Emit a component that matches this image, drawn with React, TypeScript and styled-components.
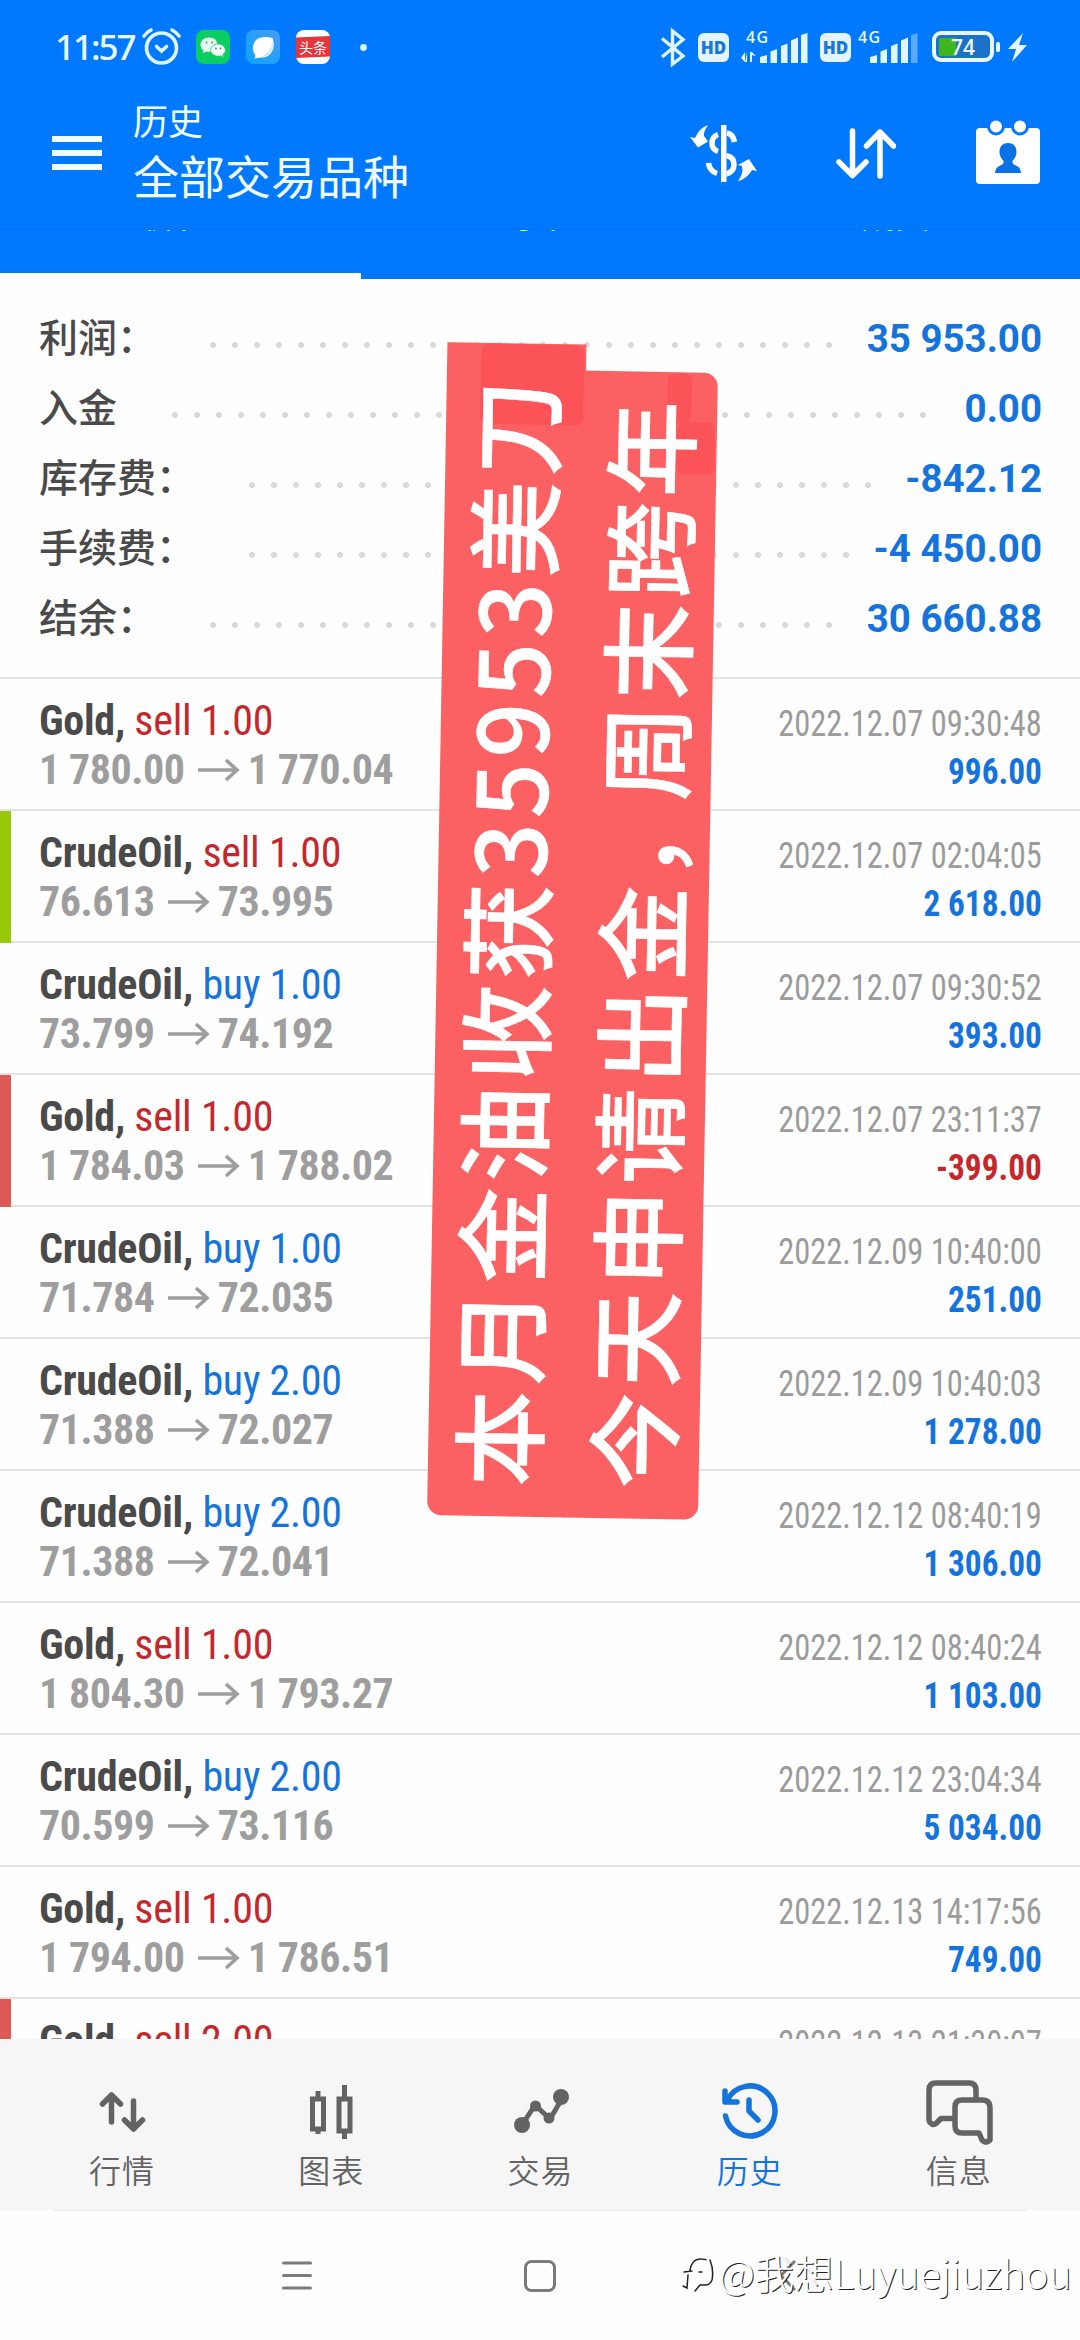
import React from "react";
import styled, { createGlobalStyle } from "styled-components";

const cjk = `"Noto Sans CJK SC", sans-serif`;
const condensed = `"Roboto Condensed", Roboto, ${cjk}`;

const GlobalStyle = createGlobalStyle`
  body { margin: 0; background: #fefefe; }
  * { box-sizing: border-box; }
`;

const Screen = styled.div`
  position: relative;
  width: 1080px;
  height: 2340px;
  overflow: hidden;
  display: flex;
  flex-direction: column;
  background: #fefefe;
  font-family: Roboto, ${cjk};
`;

const StatusBar = styled.div`
  flex: none;
  height: 94px;
  background: #0079ff;
  display: flex;
  align-items: center;
  padding: 0 52px 0 55px;
`;

const Clock = styled.span`
  width: 85px;
  color: #e9fbff;
  font: 500 35px/40px "Noto Sans", sans-serif;
  letter-spacing: -2px;
  white-space: nowrap;
`;

const StatusIcon = styled.svg<{ $gap: number }>`
  display: block;
  flex: none;
  overflow: visible;
  margin-left: ${(p) => p.$gap}px;
`;

const Spacer = styled.div`
  flex: 1;
`;

const HdBadge = styled.span<{ $gap: number }>`
  margin-left: ${(p) => p.$gap}px;
  width: 31px;
  height: 29px;
  border-radius: 6px;
  background: #e4f4ff;
  color: #1a78d8;
  font: 800 17px/29px "Open Sans", sans-serif;
  text-align: center;
`;

const Header = styled.header`
  flex: none;
  height: 136px;
  background: #0079ff;
  border-bottom: 1px solid #0070ee;
  display: flex;
  align-items: flex-start;
  padding: 0 40px 0 52px;
`;

const Titles = styled.div`
  margin-left: 31px;
  display: flex;
  flex-direction: column;
  color: #f1feff;
  font-family: ${cjk};
  font-weight: 400;
`;

const Caption = styled.div`
  margin-top: 0;
  font-size: 35px;
  line-height: 52px;
`;

const Title = styled.div`
  font-size: 46px;
  line-height: 57px;
`;

const HeaderIcon = styled.svg<{ $top: number; $gap: number }>`
  display: block;
  margin-top: ${(p) => p.$top}px;
  margin-left: ${(p) => p.$gap}px;
`;

const Tabs = styled.div`
  flex: none;
  height: 49px;
  background: #0079ff;
  display: grid;
  grid-template-columns: 361px 358px 361px;
`;

const Tab = styled.div<{ $active?: boolean }>`
  overflow: hidden;
  display: flex;
  justify-content: center;
  border-bottom: ${(p) => (p.$active ? "6px solid #fff" : "0")};
  color: #d8f4ff;
  font: 400 34px/40px ${cjk};
`;

const TabText = styled.span`
  margin-top: -36px;
  padding-right: 8px;
`;

const Summary = styled.section`
  flex: none;
  height: 398px;
  padding: 24px 38px 0 39px;
`;

const SummaryRow = styled.div`
  height: 70px;
  display: flex;
  align-items: center;
`;

const SummaryLabel = styled.span<{ $width: number }>`
  width: ${(p) => p.$width}px;
  flex: none;
  color: #4a4a4a;
  font: 500 39px/64px ${cjk};
  padding-bottom: 6px;
  white-space: nowrap;
`;

const Dots = styled.span<{ $count: number }>`
  flex: none;
  width: ${(p) => p.$count * 22}px;
  height: 6px;
  margin-top: 14px;
  background: radial-gradient(circle at 3px 3px, #dadada 2.6px, transparent 3.4px) 0 0 / 22px 6px repeat-x;
`;

const SummaryValue = styled.span`
  margin-left: auto;
  padding-top: 1px;
  color: #1474dc;
  font: 700 38.5px/70px Roboto, sans-serif;
  white-space: nowrap;
`;

const List = styled.section`
  flex: none;
  height: 1362px;
  overflow: hidden;
`;

const Deal = styled.div`
  position: relative;
  height: 132px;
  border-top: 2px solid #e3e3e3;
  padding: 17px 38px 0 39px;
  display: flex;
  justify-content: space-between;
  font-family: ${condensed};
  font-stretch: 75%;
  white-space: nowrap;
`;

const Mark = styled.span<{ $color: string }>`
  position: absolute;
  left: 0;
  top: 0;
  width: 11px;
  height: 132px;
  z-index: 1;
  background: ${(p) => p.$color};
`;

const DealLeft = styled.div`
  font-size: 42px;
  line-height: 49px;
  letter-spacing: -0.25px;
`;

const DealRight = styled.div`
  padding-top: 4px;
  font-size: 36px;
  line-height: 48px;
  text-align: right;
`;

const Symbol = styled.span`
  color: #4a4a4a;
  font-weight: 700;
`;

const Side = styled.span<{ $buy: boolean }>`
  color: ${(p) => (p.$buy ? "#1474dc" : "#c5282c")};
`;

const Prices = styled.div`
  display: flex;
  align-items: center;
  height: 49px;
  color: #9e9e9e;
  font-weight: 700;
  letter-spacing: -0.45px;
`;

const Arrow = styled.svg`
  margin: 0 8px 0 13px;
`;

const Time = styled.div`
  color: #9b9b9b;
  transform: scaleX(0.9);
  transform-origin: right;
`;

const Profit = styled.div<{ $loss: boolean }>`
  color: ${(p) => (p.$loss ? "#c5282c" : "#1474dc")};
  font-weight: 700;
  transform: scaleX(0.925);
  transform-origin: right;
`;

const BottomNav = styled.nav`
  flex: none;
  height: 171px;
  background: #f6f6f6;
  display: grid;
  grid-template-columns: repeat(5, 209.2px);
  justify-content: center;
  padding-left: 1px;
`;

const NavItem = styled.div<{ $active?: boolean }>`
  display: flex;
  flex-direction: column;
  align-items: center;
  padding-top: 37px;
  color: ${(p) => (p.$active ? "#1474dc" : "#636363")};
`;

const NavLabel = styled.span`
  margin-top: -4px;
  font: 400 32px/50px ${cjk};
  font-weight: 350;
  letter-spacing: 1px;
`;

const Hairline = styled.div`
  flex: none;
  height: 1px;
  margin: 0 52px;
  background: #ececec;
`;

const SystemBar = styled.div`
  flex: 1;
  display: flex;
  align-items: center;
  padding: 0 0 0 282px;
`;

const SysIcon = styled.svg<{ $gap: number }>`
  display: block;
  margin-left: ${(p) => p.$gap}px;
`;

const Banner = styled.div`
  position: absolute;
  left: 427px;
  top: 1515px;
  width: 1173px;
  transform-origin: 0 0;
  transform: rotate(-89deg);
  color: #fff;
  font: 500 96px/137px ${cjk};
  letter-spacing: 5.4px;
  white-space: nowrap;
`;

const BannerLine = styled.div<{ $w: number; $h: number; $radius: string }>`
  position: relative;
  width: ${(p) => p.$w}px;
  height: ${(p) => p.$h}px;
  padding-left: 30px;
  border-radius: ${(p) => p.$radius};
  background: #fb6162;

  & + & {
    margin-top: -2px;
  }
`;

const BannerText = styled.span<{ $lift: number }>`
  position: relative;
  top: -${(p) => p.$lift}px;
  -webkit-text-stroke: 0.6px #fff;
`;

const Patch = styled.span<{ $x: number; $y: number; $w: number; $h: number }>`
  position: absolute;
  left: ${(p) => p.$x}px;
  top: ${(p) => p.$y}px;
  width: ${(p) => p.$w}px;
  height: ${(p) => p.$h}px;
  border-radius: 8px;
  background: rgba(251, 70, 76, 0.5);
`;

const Comma = styled.span`
  margin-right: -22px;
`;

const Watermark = styled.div`
  position: absolute;
  left: 682px;
  top: 2245px;
  display: flex;
  align-items: center;
  gap: 4px;
  color: #fff;
  font: 300 39.400px/54px ${cjk};
  text-shadow: 1px 1px 0.5px #222;
  white-space: nowrap;
`;

const summary = [
  { label: "利润：", value: "35 953.00", start: 171, count: 29 },
  { label: "入金", value: "0.00", start: 133, count: 35 },
  { label: "库存费：", value: "-842.12", start: 210, count: 29 },
  { label: "手续费：", value: "-4 450.00", start: 210, count: 28 },
  { label: "结余：", value: "30 660.88", start: 171, count: 29 },
];

type DealData = {
  symbol: string;
  side: "buy" | "sell";
  lots: string;
  from: string;
  to: string;
  time: string;
  profit: string;
  mark?: string;
};

const deals: DealData[] = [
  { symbol: "Gold", side: "sell", lots: "1.00", from: "1 780.00", to: "1 770.04", time: "2022.12.07 09:30:48", profit: "996.00" },
  { symbol: "CrudeOil", side: "sell", lots: "1.00", from: "76.613", to: "73.995", time: "2022.12.07 02:04:05", profit: "2 618.00", mark: "#98c90b" },
  { symbol: "CrudeOil", side: "buy", lots: "1.00", from: "73.799", to: "74.192", time: "2022.12.07 09:30:52", profit: "393.00" },
  { symbol: "Gold", side: "sell", lots: "1.00", from: "1 784.03", to: "1 788.02", time: "2022.12.07 23:11:37", profit: "-399.00", mark: "#dc5a55" },
  { symbol: "CrudeOil", side: "buy", lots: "1.00", from: "71.784", to: "72.035", time: "2022.12.09 10:40:00", profit: "251.00" },
  { symbol: "CrudeOil", side: "buy", lots: "2.00", from: "71.388", to: "72.027", time: "2022.12.09 10:40:03", profit: "1 278.00" },
  { symbol: "CrudeOil", side: "buy", lots: "2.00", from: "71.388", to: "72.041", time: "2022.12.12 08:40:19", profit: "1 306.00" },
  { symbol: "Gold", side: "sell", lots: "1.00", from: "1 804.30", to: "1 793.27", time: "2022.12.12 08:40:24", profit: "1 103.00" },
  { symbol: "CrudeOil", side: "buy", lots: "2.00", from: "70.599", to: "73.116", time: "2022.12.12 23:04:34", profit: "5 034.00" },
  { symbol: "Gold", side: "sell", lots: "1.00", from: "1 794.00", to: "1 786.51", time: "2022.12.13 14:17:56", profit: "749.00" },
  { symbol: "Gold", side: "sell", lots: "2.00", from: "", to: "", time: "2022.12.13 21:30:07", profit: "", mark: "#dc5a55" },
];

const Signal = ({ arrows, weak }: { arrows?: boolean; weak?: boolean }) => (
  <StatusIcon $gap={arrows ? 12 : 7} width={arrows ? 67 : 60} height="34" viewBox={arrows ? "0 0 67 34" : "7 0 60 34"} fill="#e4f6ff">
    <text x={arrows ? 5 : 7} y="12.500" fontFamily="Open Sans" fontSize="16" fontWeight="600" textLength="22">4G</text>
    {arrows && <path d="M4 22v10l-4-4M4 32h2V22zM9 32V22h2l4 4-4-1v7z" />}
    <path d="M19 33v-6l7-2v8zM29.500 33V21.500l6.500-2.500v14zM40 33V16l6.500-2.500V33zM50 33V10.500L57 7.500V33z" />
    <path d="M60 33V5l6.500-2v30z" opacity={weak ? 0.4 : 1} />
  </StatusIcon>
);

const App = () => (
  <>
    <GlobalStyle />
    <Screen>
      <StatusBar>
        <Clock>11:57</Clock>
        <StatusIcon $gap={2} width="39" height="38" viewBox="0 0 39 38" fill="none" stroke="#e0f6ff" strokeWidth="3.6" strokeLinecap="round">
          <circle cx="19.500" cy="20" r="15" />
          <path d="M2 8q3-4 7-6M30 2q4 2 7 6M14.500 18.500l5 4.500 5-4.500" />
        </StatusIcon>
        <StatusIcon $gap={15} width="34" height="34" viewBox="0 0 34 34">
          <rect width="34" height="34" rx="8" fill="#0ace64" />
          <path d="M13 7.500c-5 0-8.500 3.200-8.500 7.200 0 2.300 1.200 4.200 3 5.500l-.8 3 3.300-1.800c1 .3 2 .4 3 .4 5 0 8.500-3.100 8.500-7.100s-3.500-7.200-8.500-7.200z" fill="#e9fff2" />
          <path d="M22 14c-4.200 0-7.200 2.800-7.200 6.100s3 6.100 7.200 6.100c.9 0 1.800-.1 2.500-.4l3 1.600-.7-2.700c1.600-1.100 2.600-2.700 2.600-4.600 0-3.300-3.200-6.100-7.400-6.100z" fill="#fff" stroke="#0ace64" strokeWidth=".8" />
          <g fill="#18a85a"><circle cx="10.500" cy="12.500" r="1" /><circle cx="16" cy="12.500" r="1" /><circle cx="20" cy="18.500" r=".9" /><circle cx="24.500" cy="18.500" r=".9" /></g>
        </StatusIcon>
        <StatusIcon $gap={16} width="34" height="34" viewBox="0 0 34 34">
          <defs>
            <linearGradient id="browser" x1="0" y1="1" x2="1" y2="0"><stop offset="0" stopColor="#08a4ff" /><stop offset="1" stopColor="#4a9cf2" /></linearGradient>
          </defs>
          <rect width="34" height="34" rx="8" fill="url(#browser)" />
          <path d="M26.500 8q3 9-1 14.500t-10 5l-7 1 1-3q-4-5-2-11T15 7.500t11.500.5z" fill="#fff" />
          <path d="M27 11q2 9-5 14-3 2-7 2 10-5 12-16z" fill="#d3e8f8" />
        </StatusIcon>
        <StatusIcon $gap={16} width="34" height="34" viewBox="0 0 34 34">
          <rect width="34" height="34" rx="8" fill="#fff" />
          <path d="M0 7.500L34 6v20.500L0 28z" fill="#e2383c" />
          <text x="17" y="23" textAnchor="middle" fontFamily="Noto Sans CJK SC" fontWeight="400" fontSize="14" fill="#fff">头条</text>
        </StatusIcon>
        <StatusIcon $gap={30} width="7" height="7" viewBox="0 0 7 7"><circle cx="3.500" cy="3.500" r="3.400" fill="#d9f3ff" /></StatusIcon>
        <Spacer />
        <StatusIcon $gap={0} width="26" height="39" viewBox="0 0 26 39" fill="none" stroke="#e0f6ff" strokeWidth="3.400">
          <path d="M2 10.500L23 28 12.500 36V3L23 11.500 2 29" />
        </StatusIcon>
        <HdBadge $gap={12}>HD</HdBadge>
        <Signal arrows />
        <HdBadge $gap={12}>HD</HdBadge>
        <Signal weak />
        <StatusIcon $gap={14} width="96" height="32" viewBox="0 0 96 32">
          <rect x="2" y="2" width="58" height="27" rx="7" fill="#1c72c8" stroke="#e6f7ff" strokeWidth="4" />
          <path d="M7 7h17v18H7z" fill="#3fb51f" />
          <text x="19" y="23.500" fontFamily="Open Sans" fontWeight="600" fontSize="21" fill="#f2fbe8" textLength="24">74</text>
          <rect x="64" y="11" width="4" height="10" rx="1.500" fill="#e6f7ff" />
          <path d="M91 2L76 18h8l-4 13 15-17h-8z" fill="#e6f7ff" />
        </StatusIcon>
      </StatusBar>

      <Header>
        <HeaderIcon $top={42} $gap={0} width="50" height="34" viewBox="0 0 50 34" fill="#f1feff">
          <path d="M0 0h50v6H0zM0 14h50v6H0zM0 28h50v6H0z" />
        </HeaderIcon>
        <Titles>
          <Caption>历史</Caption>
          <Title>全部交易品种</Title>
        </Titles>
        <Spacer />
        <HeaderIcon $top={31} $gap={0} width="67" height="57" viewBox="0 0 67 57" fill="#fff">
          <path d="M18 0q-5 7-4 11l4 5.500-10 6L0 12l5 1Q9 3 18 0zM48 56q6-8 4-15l-4-1 11-6 8 12-5-1q-5 9-14 11z" />
          <path d="M28 9.500q-6 2-6 9 0 6 6 8M37 8q6 1 7.500 9M18.500 38q1 8 8.500 10.500M36 30.500q8 1.500 8 9t-8 9.500" fill="none" stroke="#fff" strokeWidth="5.500" />
          <path d="M31 0h5v57h-5z" stroke="#0079ff" strokeWidth="1.200" strokeOpacity=".8" />
          <path d="M31 0h5.500v57H31z" />
        </HeaderIcon>
        <HeaderIcon $top={34} $gap={79} width="60" height="51" viewBox="0 0 60 51" fill="none" stroke="#fff" strokeWidth="5.500" strokeLinecap="round" strokeLinejoin="round">
          <path d="M16.500 3v44M3 34l13.500 13.500L30 34M44 48V4M30.500 18L44 4l13.500 14" />
        </HeaderIcon>
        <HeaderIcon $top={26} $gap={80} width="64" height="64" viewBox="0 0 64 64">
          <rect y="8" width="64" height="56" rx="4" fill="#fff" />
          <g fill="#fff" stroke="#0079ff" strokeWidth="3"><circle cx="20" cy="6.500" r="7.500" /><circle cx="44" cy="6.500" r="7.500" /></g>
          <path d="M32 23c5 0 8.500 3 8.500 9 0 4-2 7-4 9v2c1 3 8 2 8.500 10H19c.5-8 7.500-7 8.500-10v-2c-2-2-4-5-4-9 0-6 3.500-9 8.500-9z" fill="#0a72e6" />
        </HeaderIcon>
      </Header>
      <Tabs>
        <Tab $active><TabText>价位</TabText></Tab>
        <Tab><TabText>订单</TabText></Tab>
        <Tab><TabText>成交</TabText></Tab>
      </Tabs>

      <Summary>
        {summary.map((s) => (
          <SummaryRow key={s.label}>
            <SummaryLabel $width={s.start}>{s.label}</SummaryLabel>
            <Dots $count={s.count} />
            <SummaryValue>{s.value}</SummaryValue>
          </SummaryRow>
        ))}
      </Summary>

      <List>
        {deals.map((d) => (
          <Deal key={d.time}>
            {d.mark && <Mark $color={d.mark} />}
            <DealLeft>
              <Symbol>{d.symbol}, </Symbol>
              <Side $buy={d.side === "buy"}>{d.side} {d.lots}</Side>
              {d.from && (
                <Prices>
                  <span>{d.from}</span>
                  <Arrow width="42" height="24" viewBox="0 0 42 24" fill="none" stroke="#9e9e9e" strokeWidth="3.600">
                    <path d="M0 12h39M28 2l11 10-11 10" />
                  </Arrow>
                  <span>{d.to}</span>
                </Prices>
              )}
            </DealLeft>
            <DealRight>
              <Time>{d.time}</Time>
              <Profit $loss={d.profit.startsWith("-")}>{d.profit}</Profit>
            </DealRight>
          </Deal>
        ))}
      </List>

      <BottomNav>
        <NavItem>
          <svg width="68" height="72" viewBox="0 0 68 72" fill="none" stroke="currentColor" strokeWidth="5.500" strokeLinecap="round" strokeLinejoin="round">
            <path d="M23.500 46V19M14.500 28l9-9 9 9M45.500 25v27M36.500 44l9 9 9-9" />
          </svg>
          <NavLabel>行情</NavLabel>
        </NavItem>
        <NavItem>
          <svg width="68" height="72" viewBox="0 0 68 72" fill="none" stroke="currentColor" strokeWidth="5">
            <path d="M15.500 23h11v30h-11zM21 15v8M21 53v5M42 23h11v32H42zM47.500 9v14M47.500 55v8" />
          </svg>
          <NavLabel>图表</NavLabel>
        </NavItem>
        <NavItem>
          <svg width="68" height="72" viewBox="0 0 68 72" fill="currentColor">
            <path d="M15 49L28 29l15 14 13-22" fill="none" stroke="currentColor" strokeWidth="5" />
            <circle cx="15" cy="49" r="8" /><circle cx="28.500" cy="30" r="5.500" /><circle cx="42" cy="42" r="5.500" /><circle cx="54" cy="21" r="8" />
          </svg>
          <NavLabel>交易</NavLabel>
        </NavItem>
        <NavItem $active>
          <svg width="68" height="72" viewBox="0 0 68 72" fill="none" stroke="currentColor" strokeWidth="5.500" strokeLinecap="round" strokeLinejoin="round">
            <path d="M9.500 40a25 25 0 1 0 2-16M9 15v11h12M33 24v11l9 9" />
          </svg>
          <NavLabel>历史</NavLabel>
        </NavItem>
        <NavItem>
          <svg width="68" height="72" viewBox="0 0 68 72" fill="none" stroke="currentColor" strokeWidth="5.500" strokeLinejoin="round">
            <path d="M28 42.500H16l-5 5q-3 2-6-1-1-1-1-3V14q0-7 7-7h33q7 0 7 7v9" />
            <path d="M37 24h20q8 0 8 8v32q-4 4-8 0l-3-7H37q-7 0-7-7V31q0-7 7-7z" />
          </svg>
          <NavLabel>信息</NavLabel>
        </NavItem>
      </BottomNav>
      <Hairline />
      <SystemBar>
        <SysIcon $gap={0} width="30" height="29" viewBox="0 0 30 29" fill="none" stroke="#7b7b7b" strokeWidth="3" strokeLinecap="round"><path d="M1.500 2h27M1.500 14.500h27M1.500 27h27" /></SysIcon>
        <SysIcon $gap={212} width="32" height="32" viewBox="0 0 32 32" fill="none" stroke="#7b7b7b" strokeWidth="3"><rect x="1.500" y="1.500" width="29" height="29" rx="6" /></SysIcon>
        <SysIcon $gap={223} width="17" height="31" viewBox="0 0 17 31" fill="none" stroke="#7b7b7b" strokeWidth="3"><path d="M16 1L2 15.500 16 30" /></SysIcon>
      </SystemBar>

      <Banner>
        <BannerLine $w={1173} $h={139} $radius="14px 0 0 0">
          <Patch $x={1092} $y={34} $w={80} $h={103} />
          <BannerText $lift={2}>本月金油收获35953美刀</BannerText>
        </BannerLine>
        <BannerLine $w={1147} $h={134} $radius="0 0 14px 14px">
          <Patch $x={1045} $y={94} $w={52} $h={38} />
          <Patch $x={1096} $y={84} $w={50} $h={24} />
          <BannerText $lift={4}>今天申请出金<Comma>，</Comma>周末跨年</BannerText>
        </BannerLine>
      </Banner>

      <Watermark>
        <svg width="33" height="44" viewBox="0 0 33 44" fill="none" strokeLinecap="round">
          <path d="M1 36l4 2 1-13M2 22l8-1M8 20q2-11 10-11 6 0 6 1M17 22h3M28 10q4 10 2 20-2 5-7 5h-5l-5 6" stroke="#222" strokeWidth="1.500" />
        </svg>
        <span>@我想Luyuejiuzhou</span>
      </Watermark>
    </Screen>
  </>
);

export default App;
